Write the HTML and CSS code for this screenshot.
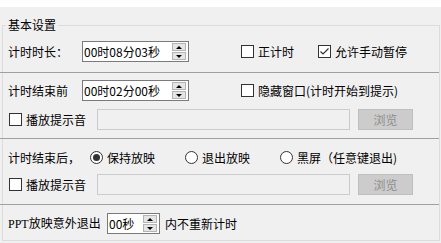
FILE: index.html
```html
<!DOCTYPE html>
<html lang="zh">
<head>
<meta charset="utf-8">
<link rel="stylesheet" href="styles.css">
</head>
<body>
<div class="topbar"></div>
<fieldset class="group">
  <legend class="legend">基本设置</legend>

  <div class="row row1">
    <span class="label">计时时长：</span>
    <div class="spin spin-wide">
      <span class="spin-text">00时08分03秒</span>
      <span class="spin-btns"><span class="sb"><i class="arr up"></i></span><span class="sb"><i class="arr down"></i></span></span>
    </div>
    <label class="check check-right"><span class="box"></span>正计时</label>
    <label class="check check-b"><span class="box"><svg width="11" height="11" viewBox="0 0 11 11"><polyline points="1.5,5.5 4,8 9.5,2.5" fill="none" stroke="#333" stroke-width="1.2"/></svg></span>允许手动暂停</label>
  </div>

  <div class="divider d1"></div>

  <div class="row row2">
    <span class="label">计时结束前</span>
    <div class="spin spin-wide">
      <span class="spin-text">00时02分00秒</span>
      <span class="spin-btns"><span class="sb"><i class="arr up"></i></span><span class="sb"><i class="arr down"></i></span></span>
    </div>
    <label class="check check-right"><span class="box"></span>隐藏窗口(计时开始到提示)</label>
  </div>

  <div class="row row3">
    <label class="check check-sound"><span class="box"></span>播放提示音</label>
    <div class="file"></div>
    <div class="btn">浏览</div>
  </div>

  <div class="divider d2"></div>

  <div class="row row4">
    <span class="label label-after">计时结束后，</span>
    <label class="radio-opt"><span class="radio on"></span>保持放映</label>
    <label class="radio-opt"><span class="radio"></span>退出放映</label>
    <label class="radio-opt radio-last"><span class="radio"></span>黑屏（任意键退出)</label>
  </div>

  <div class="row row5">
    <label class="check check-sound"><span class="box"></span>播放提示音</label>
    <div class="file"></div>
    <div class="btn">浏览</div>
  </div>

  <div class="divider d3"></div>

  <div class="row row6">
    <span class="label label-ppt"><span class="ppt">PPT</span>放映意外退出</span>
    <div class="spin spin-small">
      <span class="spin-text">00秒</span>
      <span class="spin-btns"><span class="sb"><i class="arr up"></i></span><span class="sb"><i class="arr down"></i></span></span>
    </div>
    <span class="tail">内不重新计时</span>
  </div>
</fieldset>
</body>
</html>
```

FILE: styles.css
```css
* { box-sizing: border-box; }
html, body { margin: 0; padding: 0; }
body {
  width: 441px;
  height: 243px;
  overflow: hidden;
  background: #f0f0f0;
  font-family: "Noto Sans CJK SC", "Microsoft YaHei", sans-serif;
  font-size: 12px;
  color: #000;
}
.topbar { height: 7px; background: #fff; }

.group {
  margin: 10px 1px 0 2px;
  padding: 0 0 6px 0;
  border: 1px solid #dcdcdc;
  min-width: 0;
}
.legend {
  margin-left: 3px;
  padding: 0 2px;
  line-height: 16px;
  height: 16px;
}

.row {
  display: flex;
  align-items: center;
  height: 21px;
  padding-left: 5px;
  white-space: nowrap;
  line-height: 16px;
}
.row1 { margin-top: 8px; }
.row2 { margin-top: 7px; }
.row3 { margin-top: 8px; }
.row4 { margin-top: 8px; }
.row5 { margin-top: 6px; }
.row6 { margin-top: 8px; }

.divider {
  height: 1px;
  background: #a0a0a0;
  margin-left: -3px;
}
.d1 { margin-top: 10px; }
.d2 { margin-top: 8px; }
.d3 { margin-top: 9px; }

.label { width: 74px; flex: none; }
.label-after { width: 82px; }
.label-ppt { width: 99px; }
.ppt { font-family: "Liberation Serif", serif; font-size: 12px; }

.spin {
  flex: none;
  height: 21px;
  border: 1px solid #7a7a7a;
  background: #fff;
  display: flex;
  align-items: center;
}
.spin-wide { width: 107px; }
.spin-small { width: 53px; }
.spin-text { padding-left: 1px; }
.spin-btns {
  margin-left: auto;
  margin-right: 2px;
  width: 14px;
  display: flex;
  flex-direction: column;
  gap: 1px;
  flex: none;
}
.sb {
  height: 8px;
  background: #e5e5e5;
  border: 1px solid #b4b4b4;
  display: flex;
  align-items: center;
  justify-content: center;
}
.arr { width: 0; height: 0; border-left: 3px solid transparent; border-right: 3px solid transparent; }
.arr.up { border-bottom: 3px solid #000; }
.arr.down { border-top: 3px solid #000; }

.check { display: flex; align-items: center; flex: none; }
.box {
  flex: none;
  width: 13px;
  height: 13px;
  border: 1px solid #333;
  background: #fff;
  margin-right: 4px;
  display: flex;
  align-items: center;
  justify-content: center;
}
.check-right { margin-left: 52px; }
.check-b { margin-left: 24px; }
.check-sound { width: 89px; }
.check-sound .box { margin-left: 1px; }

.file {
  width: 253px;
  height: 21px;
  border: 1px solid #cccccc;
  background: #f0f0f0;
  flex: none;
}
.btn {
  margin-left: 8px;
  width: 55px;
  height: 21px;
  background: #cccccc;
  border: 1px solid #bfbfbf;
  color: #8e8e8e;
  display: flex;
  align-items: center;
  justify-content: center;
  flex: none;
}

.radio-opt { display: flex; align-items: center; width: 95px; flex: none; }
.radio-last { width: auto; }
.radio {
  flex: none;
  width: 13px;
  height: 13px;
  border: 1px solid #333;
  border-radius: 50%;
  background: #fff;
  margin-right: 4px;
  display: flex;
  align-items: center;
  justify-content: center;
}
.radio.on::after {
  content: "";
  width: 7px;
  height: 7px;
  border-radius: 50%;
  background: #333;
}
.tail { margin-left: 5px; }
```
